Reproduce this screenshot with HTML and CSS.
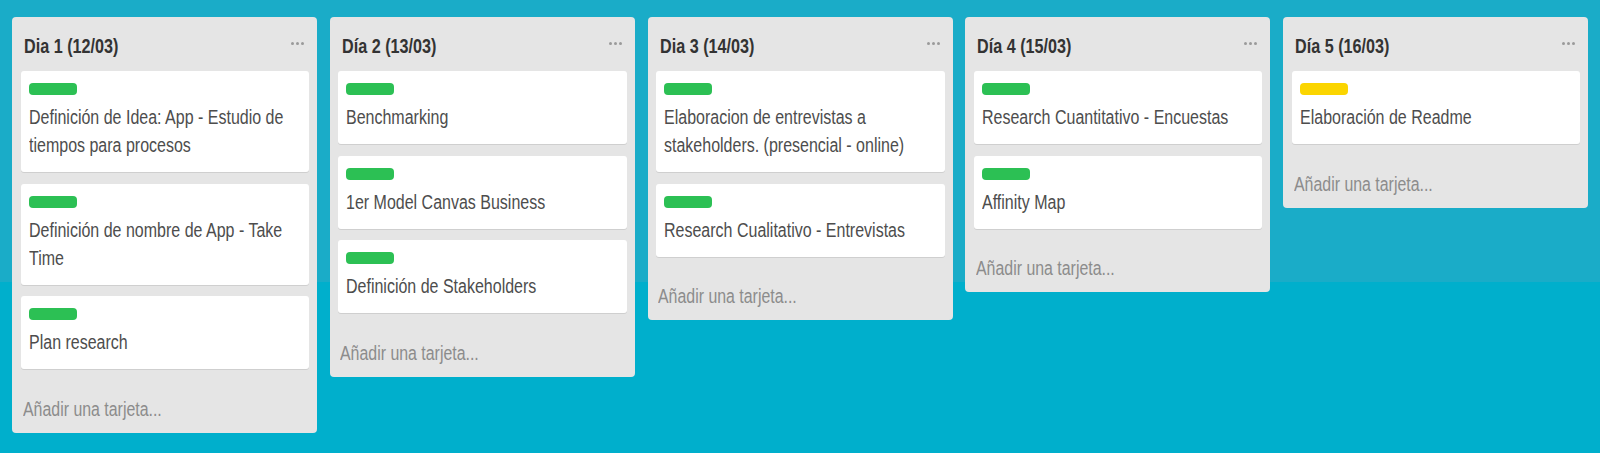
FILE: index.html
```html
<!DOCTYPE html>
<html lang="es">
<head>
<meta charset="utf-8">
<title>Tablero</title>
<link rel="stylesheet" href="styles.css">
</head>
<body>
<div class="board">
  <section class="list">
    <header class="list-head"><span class="list-title">Dia 1 (12/03)</span><span class="dots"><i></i><i></i><i></i></span></header>
    <div class="card"><div class="label green"></div><div class="card-text">Definición de Idea: App - Estudio de tiempos para procesos</div></div>
    <div class="card"><div class="label green"></div><div class="card-text">Definición de nombre de App - Take Time</div></div>
    <div class="card"><div class="label green"></div><div class="card-text">Plan research</div></div>
    <div class="add"><span class="add-text">Añadir una tarjeta...</span></div>
  </section>
  <section class="list">
    <header class="list-head"><span class="list-title">Día 2 (13/03)</span><span class="dots"><i></i><i></i><i></i></span></header>
    <div class="card"><div class="label green"></div><div class="card-text">Benchmarking</div></div>
    <div class="card"><div class="label green"></div><div class="card-text">1er Model Canvas Business</div></div>
    <div class="card"><div class="label green"></div><div class="card-text">Definición de Stakeholders</div></div>
    <div class="add"><span class="add-text">Añadir una tarjeta...</span></div>
  </section>
  <section class="list">
    <header class="list-head"><span class="list-title">Dia 3 (14/03)</span><span class="dots"><i></i><i></i><i></i></span></header>
    <div class="card"><div class="label green"></div><div class="card-text">Elaboracion de entrevistas a stakeholders. (presencial - online)</div></div>
    <div class="card"><div class="label green"></div><div class="card-text">Research Cualitativo - Entrevistas</div></div>
    <div class="add"><span class="add-text">Añadir una tarjeta...</span></div>
  </section>
  <section class="list">
    <header class="list-head"><span class="list-title">Día 4 (15/03)</span><span class="dots"><i></i><i></i><i></i></span></header>
    <div class="card"><div class="label green"></div><div class="card-text">Research Cuantitativo - Encuestas</div></div>
    <div class="card"><div class="label green"></div><div class="card-text">Affinity Map</div></div>
    <div class="add"><span class="add-text">Añadir una tarjeta...</span></div>
  </section>
  <section class="list">
    <header class="list-head"><span class="list-title">Día 5 (16/03)</span><span class="dots"><i></i><i></i><i></i></span></header>
    <div class="card"><div class="label yellow"></div><div class="card-text">Elaboración de Readme</div></div>
    <div class="add"><span class="add-text">Añadir una tarjeta...</span></div>
  </section>
</div>
</body>
</html>
```
FILE: styles.css
```css
html, body {
  margin: 0;
  padding: 0;
}
body {
  width: 1600px;
  height: 453px;
  overflow: hidden;
  background: linear-gradient(to bottom, #1aacc8 0, #1aacc8 282px, #00afcc 282px, #00afcc 100%);
  font-family: "Liberation Sans", Arial, sans-serif;
}
.board {
  display: flex;
  align-items: flex-start;
  gap: 12.75px;
  padding: 17px 0 0 12px;
}
.list {
  flex: 0 0 305px;
  width: 305px;
  box-sizing: border-box;
  background: #e5e5e5;
  border-radius: 4px;
  padding: 0 8px 0 8.5px;
}
.list-head {
  display: flex;
  justify-content: space-between;
  align-items: flex-start;
  padding: 15px 5px 11px 3.5px;
  height: 28px;
}
.list-title {
  display: inline-block;
  font-size: 21px;
  line-height: 28px;
  font-weight: bold;
  color: #333333;
  white-space: nowrap;
  transform: scaleX(0.77);
  transform-origin: left center;
}
.dots {
  display: flex;
  gap: 2px;
  margin-top: 10px;
}
.dots i {
  display: block;
  width: 3px;
  height: 3px;
  border-radius: 50%;
  background: #9a9a9a;
}
.card {
  background: #ffffff;
  border-radius: 3px;
  box-shadow: 0 1px 0 #cfcfcf;
  padding: 12px 8px 13px 8px;
  margin-bottom: 11.5px;
}
.label {
  width: 48px;
  height: 12px;
  border-radius: 4px;
  margin-bottom: 8px;
}
.label.green {
  background: #2cc054;
}
.label.yellow {
  background: #fbd500;
}
.card-text {
  width: calc(100% / 0.8);
  font-size: 20px;
  line-height: 28px;
  color: #4d4d4d;
  transform: scaleX(0.8);
  transform-origin: left top;
}
.add {
  padding: 14px 0 10px 2px;
  height: 28px;
}
.add-text {
  display: inline-block;
  font-size: 20px;
  line-height: 28px;
  color: #8c8c8c;
  white-space: nowrap;
  transform: scaleX(0.795);
  transform-origin: left center;
}
```
